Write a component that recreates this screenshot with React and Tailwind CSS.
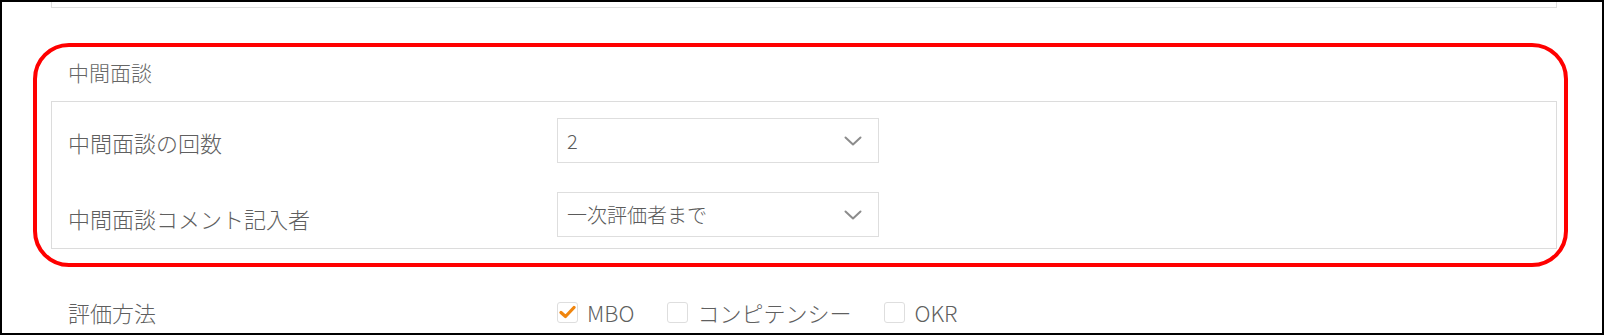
import React from "react";

const font = { fontFamily: '"Noto Sans CJK JP", "Noto Sans", sans-serif' };

function Chevron() {
  return (
    <svg width="18" height="10" viewBox="0 0 18 10" fill="none" className="shrink-0">
      <path d="M1.5 1.5 L9 8.5 L16.5 1.5" stroke="#8c8c8c" strokeWidth="2" strokeLinecap="round" strokeLinejoin="round" />
    </svg>
  );
}

function Select({ value }) {
  return (
    <div className="w-[322px] h-[45px] border border-[#dedede] bg-white flex items-center justify-between pl-[9px] pr-[16px]">
      <span className="text-[20px] leading-none text-[#5a5a5a]">{value}</span>
      <Chevron />
    </div>
  );
}

function Checkbox({ checked, label }) {
  return (
    <div className="flex items-center gap-[9px]">
      <div className="w-[21px] h-[21px] border border-[#dedede] rounded-[3px] bg-white flex items-center justify-center">
        {checked && (
          <svg width="17" height="14" viewBox="0 0 17 14" fill="none">
            <path d="M2 7.5 L6.5 11.5 L15 2.5" stroke="#f0860f" strokeWidth="3.2" strokeLinecap="round" strokeLinejoin="round" />
          </svg>
        )}
      </div>
      <span className="text-[22px] leading-[28px] text-[#5f5f5f]">{label}</span>
    </div>
  );
}

export default function App() {
  return (
    <div className="w-[1604px] h-[335px] border-2 border-black bg-white overflow-hidden box-border font-light" style={font}>
      {/* previous section bottom */}
      <div className="ml-[49px] w-[1506px] h-[6px] border border-t-0 border-[#dedede]" />

      {/* 中間面談 section */}
      <div className="relative">
        <div className="ml-[49px] w-[1506px]">
          <div className="pt-[50px] pl-[17px] text-[21px] leading-[28px] text-[#666]">中間面談</div>
          <div className="mt-[15px] border border-[#dcdcdc] pt-[16px] pb-[11px] flex flex-col gap-[29px]">
            <div className="flex items-center">
              <div className="w-[505px] pl-[16px] pt-[3px] text-[22px] leading-[28px] text-[#5f5f5f]">中間面談の回数</div>
              <Select value="2" />
            </div>
            <div className="flex items-center">
              <div className="w-[505px] pl-[16px] pt-[7px] text-[22px] leading-[28px] text-[#5f5f5f]">中間面談コメント記入者</div>
              <Select value="一次評価者まで" />
            </div>
          </div>
        </div>
        {/* annotation frame */}
        <div className="absolute left-[31px] top-[35px] w-[1535px] h-[224px] border-4 border-[#ff0000] rounded-[36px] pointer-events-none" />
      </div>

      {/* 評価方法 */}
      <div className="mt-[49px] ml-[49px] flex items-center">
        <div className="w-[506px] pl-[17px] text-[22px] leading-[28px] text-[#5f5f5f]">評価方法</div>
        <div className="flex items-center gap-[33px]">
          <Checkbox checked label="MBO" />
          <Checkbox label="コンピテンシー" />
          <Checkbox label="OKR" />
        </div>
      </div>
    </div>
  );
}
